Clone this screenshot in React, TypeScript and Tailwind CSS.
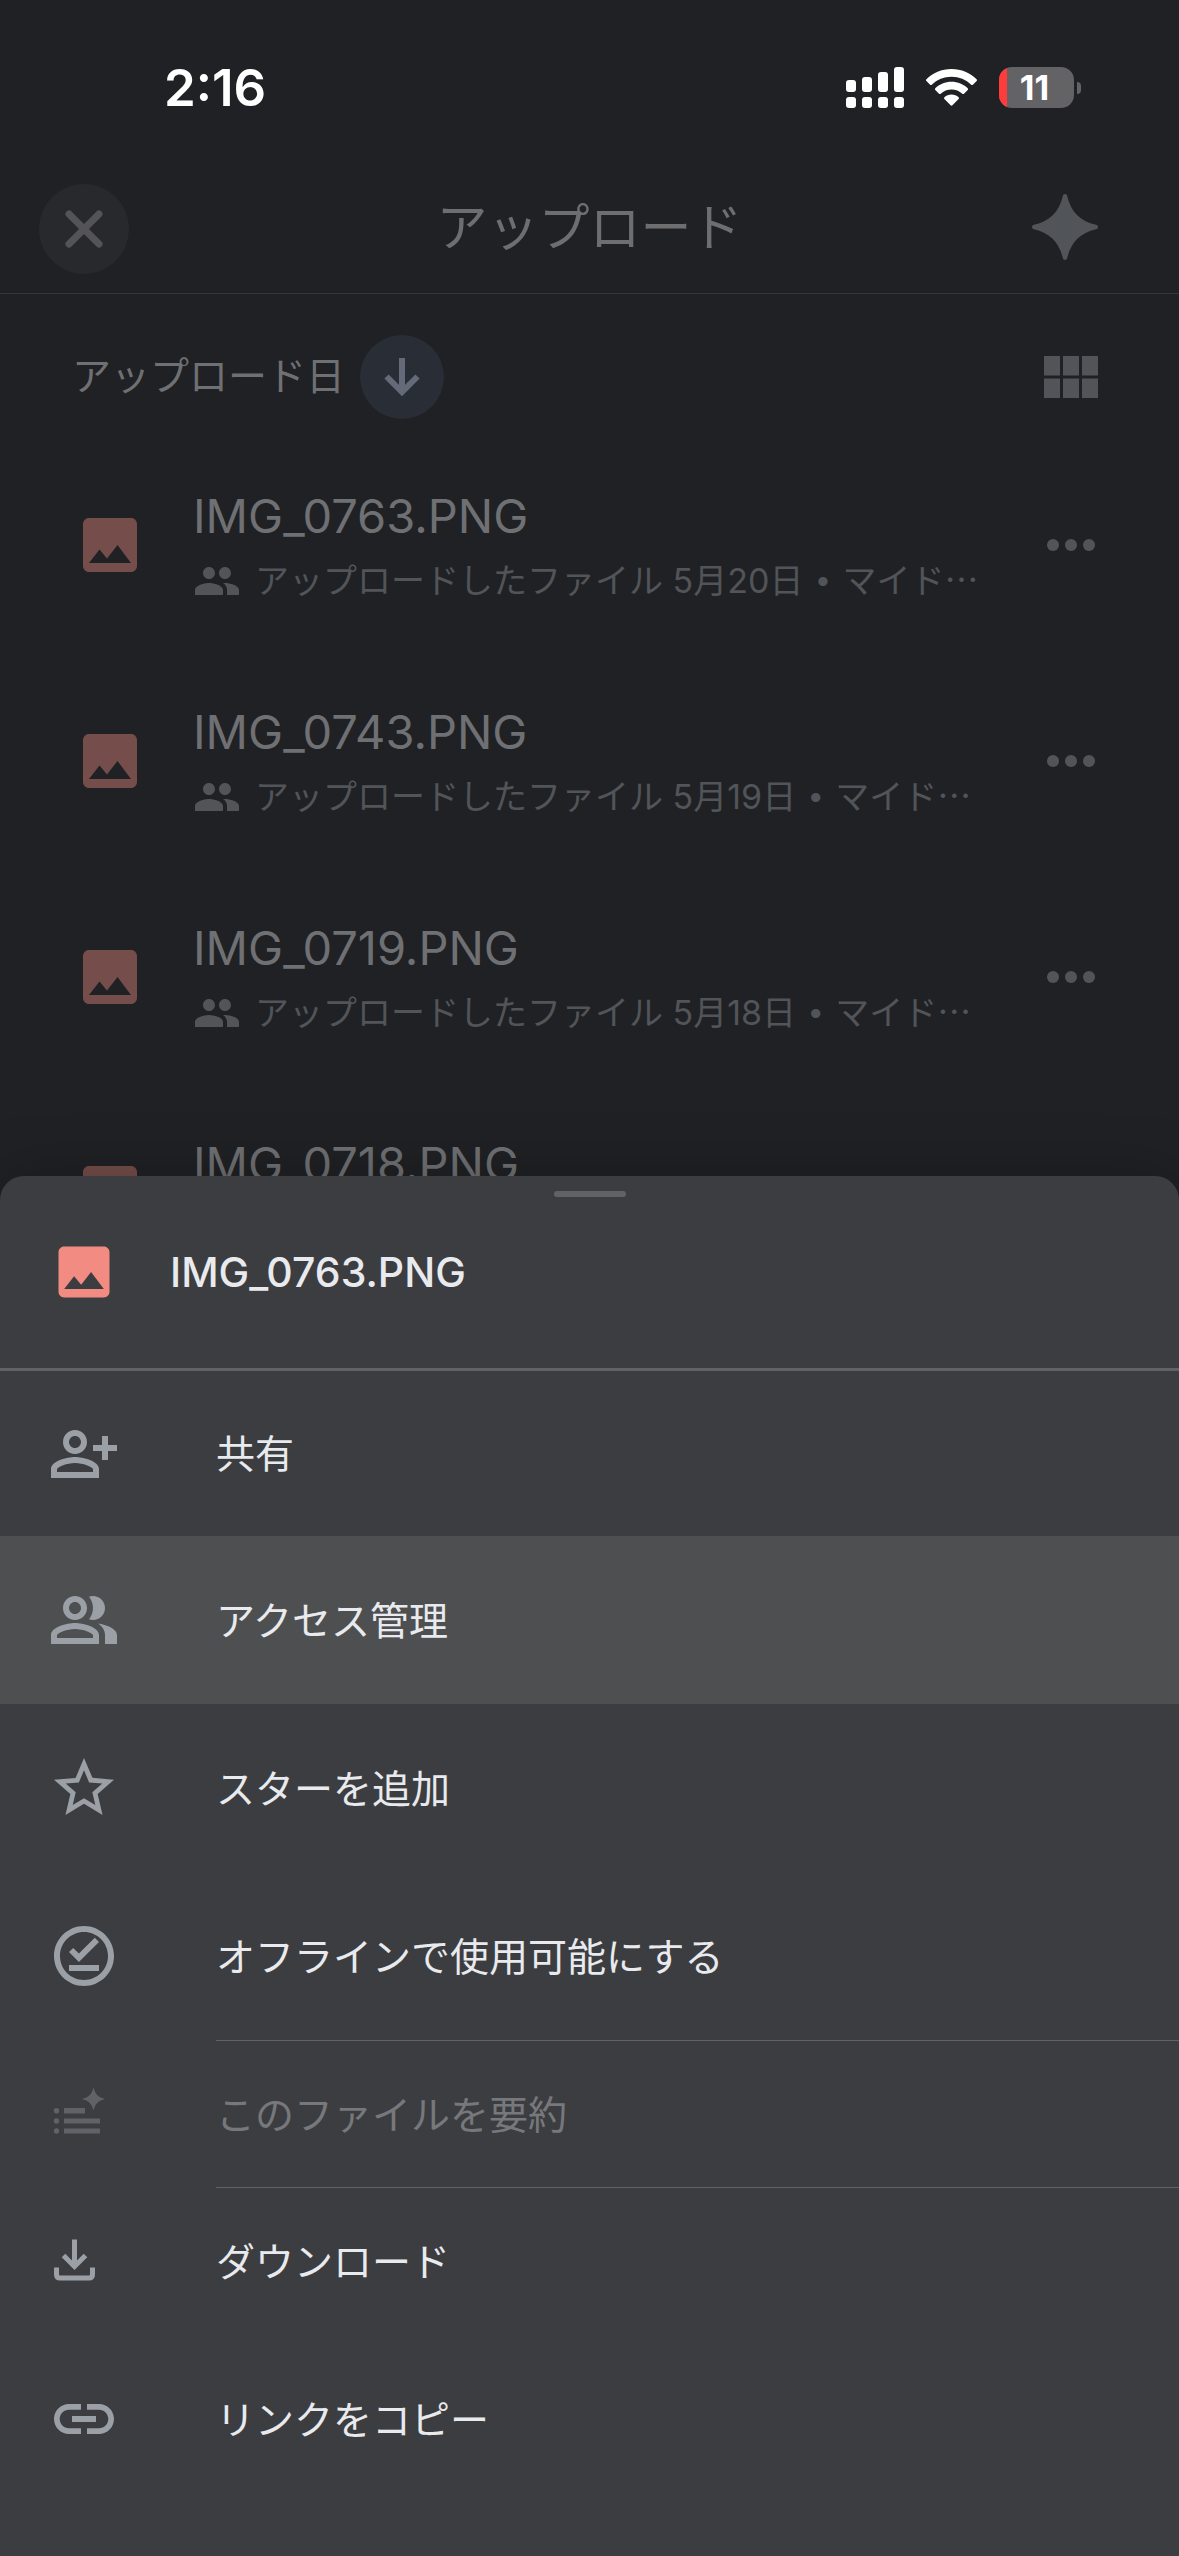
import { ReactNode, useState } from "react";
import {
  MdImage,
  MdLink,
  MdOutlineOfflinePin,
  MdPeople,
  MdStarBorder,
} from "react-icons/md";

interface DriveFile {
  id: number;
  name: string;
  uploaded: string;
}

interface MenuItem {
  id: string;
  label: string;
  icon: ReactNode;
  height: string;
  disabled?: boolean;
  divider?: boolean;
}

const files: DriveFile[] = [
  { id: 1, name: "IMG_0763.PNG", uploaded: "5月20日" },
  { id: 2, name: "IMG_0743.PNG", uploaded: "5月19日" },
  { id: 3, name: "IMG_0719.PNG", uploaded: "5月18日" },
  { id: 4, name: "IMG_0718.PNG", uploaded: "5月18日" },
];

const SignalIcon = () => (
  <svg width="58" height="41" viewBox="0 0 58 41" fill="currentColor">
    <rect x="0" y="13" width="10" height="12" rx="3" />
    <rect x="16" y="10" width="10" height="15" rx="3" />
    <rect x="32" y="5" width="10" height="20" rx="3" />
    <rect x="48" y="0" width="10" height="25" rx="3" />
    <rect x="0" y="30" width="10" height="11" rx="3" />
    <rect x="16" y="30" width="10" height="11" rx="3" />
    <rect x="32" y="30" width="10" height="11" rx="3" />
    <rect x="48" y="30" width="10" height="11" rx="3" />
  </svg>
);

const WifiIcon = () => (
  <svg width="51" height="37" viewBox="0 0 51 37" fill="currentColor">
    <path d="M25.500 0C35.300 0 44.300 3.900 50.600 10.300c.5.500.5 1.200 0 1.700l-3.700 3.700c-.5.500-1.200.500-1.700 0C40 10.600 33.100 7.700 25.500 7.700S11 10.600 5.800 15.700c-.5.500-1.200.500-1.700 0L.4 12c-.5-.5-.5-1.200 0-1.700C6.700 3.900 15.700 0 25.500 0z" />
    <path d="M25.500 12.800c6.300 0 12 2.500 16.200 6.500.5.500.5 1.200 0 1.700L38 24.700c-.5.500-1.200.5-1.700 0-2.900-2.600-6.600-4.200-10.800-4.200s-7.900 1.600-10.800 4.200c-.5.500-1.200.5-1.700 0L9.300 21c-.5-.5-.5-1.200 0-1.700 4.200-4 9.900-6.500 16.200-6.500z" />
    <path d="M25.500 25.600c2.700 0 5.200 1 7.100 2.700.5.500.5 1.200 0 1.700l-6.200 6.300c-.5.500-1.300.5-1.800 0L18.400 30c-.5-.5-.5-1.200 0-1.700 1.900-1.700 4.400-2.700 7.100-2.700z" />
  </svg>
);

const CloseIcon = () => (
  <svg width="38" height="38" viewBox="0 0 38 38" fill="none">
    <path
      d="M4 4l30 30M34 4L4 34"
      stroke="currentColor"
      strokeWidth="7"
      strokeLinecap="round"
    />
  </svg>
);

const SparkleIcon = () => (
  <svg width="66" height="66" viewBox="0 0 66 66" fill="currentColor">
    <path d="M33 0c1.200 0 1.900.8 2.200 2C39 18 48 27 64 30.800c1.200.3 2 1 2 2.200s-.8 1.900-2 2.200C48 39 39 48 35.200 64c-.3 1.200-1 2-2.200 2s-1.900-.8-2.200-2C27 48 18 39 2 35.200.8 34.900 0 34.200 0 33s.8-1.900 2-2.200C18 27 27 18 30.800 2c.3-1.200 1-2 2.200-2z" />
  </svg>
);

const ArrowDownIcon = () => (
  <svg width="36" height="38" viewBox="0 0 36 38" fill="none">
    <path
      d="M18 0v34M2.500 18.500L18 34l15.500-15.500"
      stroke="currentColor"
      strokeWidth="6"
    />
  </svg>
);

const GridIcon = () => (
  <svg width="54" height="42" viewBox="0 0 54 42" fill="currentColor">
    <path d="M0 0h16v19.500H0zM19 0h16v19.500H19zM38 0h16v19.500H38zM0 22.500h16V42H0zM19 22.500h16V42H19zM38 22.500h16V42H38z" />
  </svg>
);

const MoreIcon = () => (
  <svg width="48" height="12" viewBox="0 0 48 12" fill="currentColor">
    <circle cx="6" cy="6" r="6" />
    <circle cx="24" cy="6" r="6" />
    <circle cx="42" cy="6" r="6" />
  </svg>
);

const ShareIcon = () => (
  <svg width="72" height="72" viewBox="0 0 24 24" fill="currentColor">
    <path d="M9 12c2.210 0 4-1.790 4-4s-1.790-4-4-4-4 1.790-4 4 1.790 4 4 4zm0-6c1.100 0 2 .9 2 2s-.9 2-2 2-2-.9-2-2 .9-2 2-2z" />
    <path d="M9 13c-2.670 0-8 1.340-8 4v3h16v-3c0-2.660-5.330-4-8-4zm6 5H3v-.99C3.200 16.290 6.300 15 9 15s5.800 1.290 6 2v1z" />
    <path d="M20 9V6h-2v3h-3v2h3v3h2v-3h3V9z" />
  </svg>
);

const AccessIcon = () => (
  <svg width="72" height="72" viewBox="0 0 24 24" fill="currentColor">
    <path d="M9 12c2.210 0 4-1.790 4-4s-1.790-4-4-4-4 1.790-4 4 1.790 4 4 4zm0-6c1.100 0 2 .9 2 2s-.9 2-2 2-2-.9-2-2 .9-2 2-2z" />
    <path d="M9 13c-2.670 0-8 1.340-8 4v3h16v-3c0-2.660-5.330-4-8-4zm6 5H3v-.99C3.200 16.290 6.300 15 9 15s5.800 1.290 6 2v1z" />
    <path d="M15 12c2.210 0 4-1.790 4-4s-1.790-4-4-4c-.47 0-.91.1-1.330.24C14.500 5.270 15 6.580 15 8s-.5 2.730-1.330 3.760c.42.140.86.240 1.330.240z" />
    <path d="M16.670 13.130C18.040 14.060 19 15.320 19 17v3h4v-3c0-2.180-3.570-3.470-6.330-3.870z" />
  </svg>
);

const SummaryIcon = () => (
  <svg width="72" height="72" viewBox="0 0 72 72" fill="currentColor">
    <path d="M45.500 9.500c1.600 6.600 5 10 11.500 11.500-6.500 1.500-9.900 4.900-11.500 11.500C43.900 25.900 40.500 22.500 34 21c6.500-1.500 9.900-4.900 11.500-11.500z" />
    <path d="M16 30h21v5.500H16zM16 40.500h36v5H16zM16 50.500h36v5H16z" />
    <circle cx="8.500" cy="32.800" r="2.700" />
    <circle cx="8.500" cy="43" r="2.700" />
    <circle cx="8.500" cy="53" r="2.700" />
  </svg>
);

const DownloadIcon = () => (
  <svg width="72" height="72" viewBox="0 0 72 72" fill="none">
    <path
      d="M26.500 14.500v27M15.500 30.500L26.500 41.500 37.500 30.500M8.500 42.500v7q0 3.500 3.500 3.500h29q3.500 0 3.500-3.500v-7"
      stroke="currentColor"
      strokeWidth="5"
    />
  </svg>
);

const menuItems: MenuItem[] = [
  { id: "share", label: "共有", icon: <ShareIcon />, height: "h-[165px]" },
  {
    id: "access",
    label: "アクセス管理",
    icon: <AccessIcon />,
    height: "h-[168px]",
  },
  {
    id: "star",
    label: "スターを追加",
    icon: <MdStarBorder size={72} />,
    height: "h-[168px]",
  },
  {
    id: "offline",
    label: "オフラインで使用可能にする",
    icon: <MdOutlineOfflinePin size={72} />,
    height: "h-[168px]",
  },
  {
    id: "summary",
    label: "このファイルを要約",
    icon: <SummaryIcon />,
    height: "h-[146px]",
    disabled: true,
    divider: true,
  },
  {
    id: "download",
    label: "ダウンロード",
    icon: <DownloadIcon />,
    height: "h-[146px]",
    divider: true,
  },
  {
    id: "link",
    label: "リンクをコピー",
    icon: <MdLink size={72} />,
    height: "h-[170px]",
  },
];

function StatusBar() {
  return (
    <div className="flex h-[165px] items-center justify-between pt-[10px] pr-[98px] pl-[164px] text-white">
      <span className="text-[51px] leading-none font-semibold">2:16</span>
      <div className="flex items-center gap-[22px]">
        <SignalIcon />
        <WifiIcon />
        <div className="flex items-center gap-[3px]">
          <div className="flex h-[41px] w-[75px] items-center overflow-hidden rounded-[13px] bg-[#636366]">
            <div className="h-full w-2 bg-[#ff3b3c]" />
            <span className="flex-1 pr-3 text-center text-[34px] leading-none font-bold">
              11
            </span>
          </div>
          <div className="h-3 w-1 rounded-r-full bg-[#636366]" />
        </div>
      </div>
    </div>
  );
}

function FileRow({ file }: { file: DriveFile }) {
  return (
    <li className="flex h-[216px] items-center pr-[84px] pl-[74px]">
      <MdImage size={72} className="shrink-0 text-[#754d4a]" />
      <div className="ml-[47px] min-w-0 flex-1">
        <p className="text-[47px] leading-[72px] text-[#6f7073]">{file.name}</p>
        <p className="flex items-center text-[34px] leading-[58px] whitespace-nowrap text-[#515458]">
          <MdPeople size={48} className="mr-[14px] shrink-0" />
          <span>
            アップロードしたファイル {file.uploaded}{" "}
            <span className="mx-1 font-['Liberation_Sans']">•</span>{" "}
            マイド⋯
          </span>
        </p>
      </div>
      <button aria-label={`${file.name} のメニュー`} className="text-[#515458]">
        <MoreIcon />
      </button>
    </li>
  );
}

function ActionSheet({ fileName }: { fileName: string }) {
  const [active, setActive] = useState("access");

  return (
    <section
      aria-label={fileName}
      className="absolute inset-x-0 bottom-0 rounded-t-3xl bg-[#3c3d41] pb-[52px] text-[#e8eaed] shadow-[0_0_60px_rgba(0,0,0,0.25)]"
    >
      <div className="flex h-[195px] flex-col border-b-[3px] border-[#5f6266] pt-[15px]">
        <div className="mx-auto h-[6px] w-[72px] rounded-full bg-[#5f6368]" />
        <div className="flex items-center gap-[52px] pt-[41px] pl-[50px]">
          <MdImage size={68} className="text-[#f28b82]" />
          <h2 className="text-[41px] leading-none font-medium">{fileName}</h2>
        </div>
      </div>
      <ul>
        {menuItems.map((item) => (
          <li key={item.id}>
            {item.divider && <div className="ml-[216px] h-px bg-[#5f6266]" />}
            <button
              disabled={item.disabled}
              onClick={() => setActive(item.id)}
              className={`flex w-full items-center gap-24 pl-12 text-left text-[39px] ${item.height} ${
                active === item.id ? "bg-[#4e4f51]" : ""
              } ${item.disabled ? "text-[#77787b]" : ""}`}
            >
              <span
                className={item.disabled ? "text-[#5f6368]" : "text-[#9aa0a6]"}
              >
                {item.icon}
              </span>
              <span className="pt-[2px]">{item.label}</span>
            </button>
          </li>
        ))}
      </ul>
    </section>
  );
}

function App() {
  return (
    <div
      lang="ja"
      className="relative h-screen overflow-hidden bg-[#202124] font-['Inter','Noto_Sans_CJK_JP',sans-serif]"
    >
      <StatusBar />

      <header className="grid h-[129px] grid-cols-[1fr_auto_1fr] items-center border-b border-[#36373a] px-[39px]">
        <button
          aria-label="閉じる"
          className="flex size-[90px] items-center justify-center rounded-full bg-[#28292c] text-[#545357]"
        >
          <CloseIcon />
        </button>
        <h1 className="pb-1 text-[51px] leading-none text-[#6e6e70]">
          アップロード
        </h1>
        <button
          aria-label="Gemini"
          className="mr-[42px] justify-self-end pb-1 text-[#515459]"
        >
          <SparkleIcon />
        </button>
      </header>

      <main>
        <div className="flex h-[143px] items-center pt-[22px] pr-[81px] pl-[72px]">
          <span className="text-[39px] text-[#6f7073]">アップロード日</span>
          <button
            aria-label="降順"
            className="ml-[15px] flex size-[84px] items-center justify-center rounded-full bg-[#292d36] text-[#646a78]"
          >
            <ArrowDownIcon />
          </button>
          <button aria-label="グリッド表示" className="ml-auto text-[#515459]">
            <GridIcon />
          </button>
        </div>
        <ul>
          {files.map((file) => (
            <FileRow key={file.id} file={file} />
          ))}
        </ul>
      </main>

      <ActionSheet fileName={files[0].name} />
    </div>
  );
}

export default App;
